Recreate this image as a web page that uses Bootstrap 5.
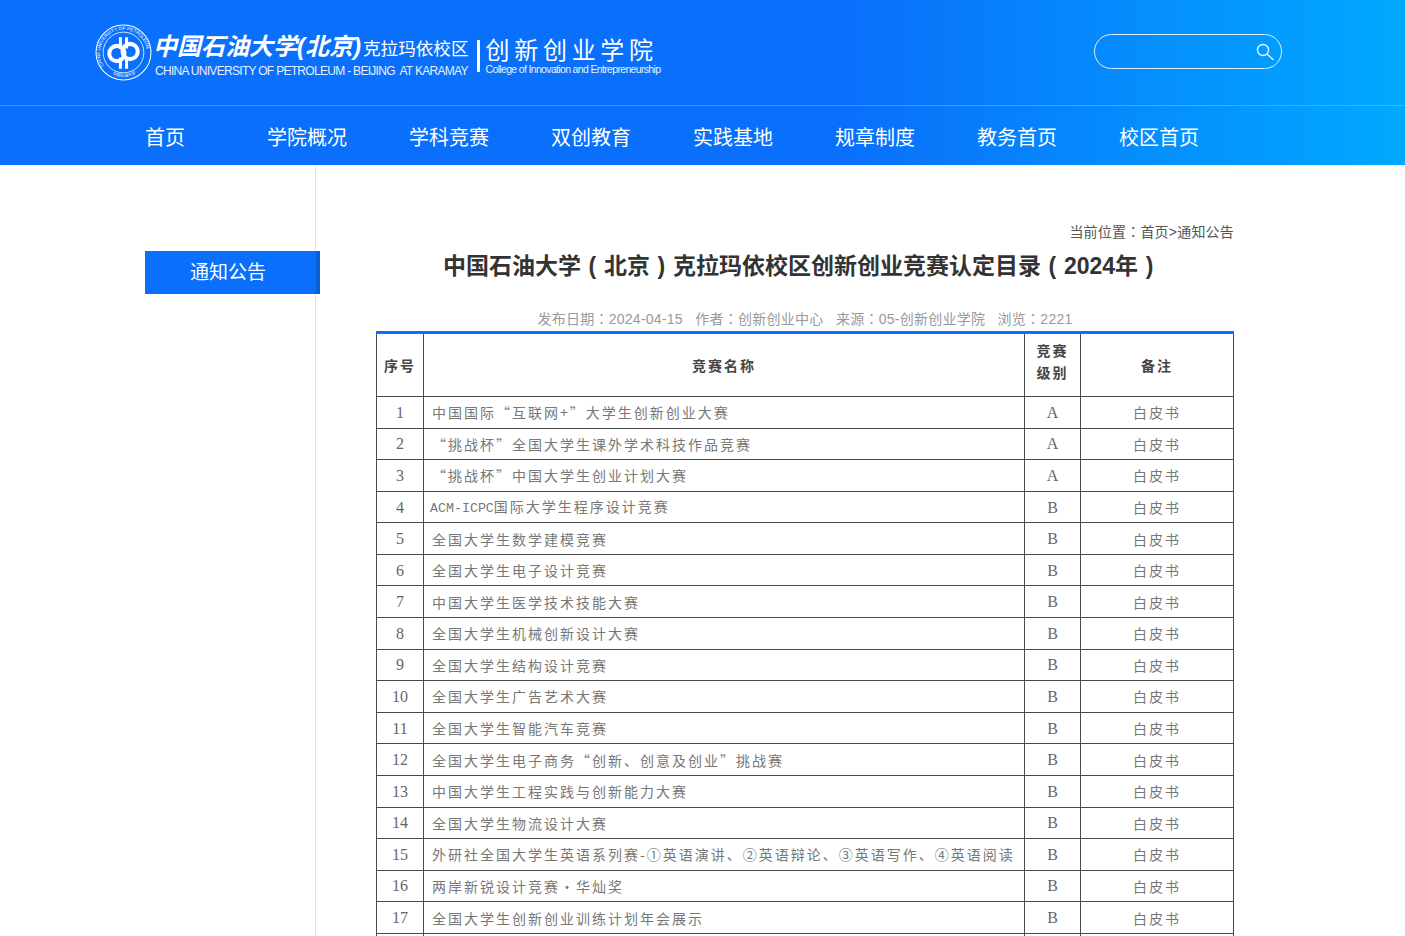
<!DOCTYPE html>
<html lang="zh-CN">
<head>
    <meta charset="UTF-8">
    <meta name="viewport" content="width=device-width, initial-scale=1.0">
    <title>创新创业学院</title>
    <link rel="stylesheet" href="https://cdn.jsdelivr.net/npm/bootstrap@5.3.0/dist/css/bootstrap.min.css">
    <style>
        body {
            font-family: "Liberation Sans", "Noto Sans CJK SC", sans-serif;
            color: #333;
            background-color: #fff;
        }
        .wide-punct { font-family: "Noto Sans CJK TC", sans-serif; line-height: 0; }
        .title-paren { display: inline-block; width: 1em; text-align: center; }
        .site-head {
            background: linear-gradient(90deg, #0a6ffb 0%, #0a6ffb 60%, #00a9ff 100%);
            color: #fff;
        }
        .head-top {
            height: 106px;
            padding: 24px 123px 0 95px;
            border-bottom: 1px solid rgba(255, 255, 255, .22);
        }
        .seal { width: 57px; height: 57px; flex: none; }
        .logo-text { margin: 6px 0 0 1px; }
        .logo-cn {
            font-size: 24px;
            line-height: 34px;
            height: 34px;
            font-weight: 700;
            font-style: italic;
            white-space: nowrap;
        }
        .logo-cn small { font-size: 17.6px; font-weight: 400; font-style: normal; margin-left: 2px; }
        .logo-en { font-size: 12px; line-height: 14px; letter-spacing: -.7px; margin-left: 2px; white-space: pre; opacity: .9; }
        .logo-bar { width: 3px; height: 32px; background: #fff; margin: 16px 6px 0 8px; }
        .college-cn { font-size: 24px; line-height: 26px; letter-spacing: 4.7px; margin-top: 14px; white-space: nowrap; }
        .college-en { font-size: 10.5px; line-height: 12px; letter-spacing: -.66px; margin-top: -1px; white-space: nowrap; opacity: .9; }
        .search-box { width: 188px; margin-top: 10px; }
        .search-box .form-control {
            height: 35px;
            background: transparent;
            border: 1px solid #d8f0ff;
            color: #fff;
            box-shadow: none;
        }
        .search-glass { position: absolute; right: 7px; top: 8px; width: 20px; height: 20px; }
        .main-nav { height: 59px; padding-left: 94px; }
        .main-nav .nav-link {
            width: 142px;
            padding: 0;
            line-height: 65px;
            text-align: center;
            font-size: 20px;
            color: #fff;
        }
        .page-body { min-height: 771px; }
        .side-col { width: 316px; flex: none; padding: 86px 0 0 145px; border-right: 1px solid #e4e4e4; }
        .side-link {
            display: block;
            width: 175px;
            height: 43px;
            line-height: 44px;
            padding-right: 5px;
            text-align: center;
            font-size: 19px;
            color: #fff;
            background: #0a6ffb;
            border-right: 4px solid #0b5fd6;
            text-decoration: none;
            position: relative;
        }
        .main-col { width: 858px; margin-left: 60px; flex: none; }
        .crumbs { font-size: 14px; line-height: 20px; padding-top: 57px; color: #555; letter-spacing: .2px; }
        .doc-title { font-size: 23px; line-height: 32px; height: 32px; font-weight: 700; color: #333; margin: 8px 0 0 -6px; text-align: center; }
        .doc-meta { font-size: 14px; line-height: 20px; color: #999; margin-top: 27px; height: 22px; letter-spacing: .25px; }
        .comp-table {
            border-top: 3px solid #0a6ffb;
        }
        .comp-table table {
            table-layout: fixed;
            border-collapse: separate;
            border-spacing: 0;
            border-left: 1px solid #4a4a4a;
            width: 858px;
            margin: 0;
            font-family: "Noto Sans CJK SC", sans-serif;
            font-size: 14px;
            letter-spacing: 2px;
            color: #777;
        }
        .comp-table th, .comp-table td {
            padding: 0 8px;
            height: 31.59px;
            line-height: 22px;
            vertical-align: middle;
            border-width: 0 1px 1px 0;
            border-style: solid;
            border-color: #4a4a4a;
            color: #777;
            background: transparent;
            white-space: nowrap;
        }
        .comp-table th { height: 63px; padding: 0; color: #444; text-align: center; font-weight: 700; }
        .comp-table th.two-line { padding: 0 0 9px; }
        .comp-table .lat { font-family: "Liberation Mono", monospace; font-size: 13.3px; letter-spacing: 0; margin-left: -2px; }
        .comp-table .num { font-family: "Liberation Serif", serif; font-size: 16px; letter-spacing: 0; padding: 1px 0 0; text-align: center; color: #666; }
        .comp-table .mid { padding: 0; text-align: center; }
    </style>
</head>
<body>
    <header class="site-head">
        <div class="head-top d-flex justify-content-between align-items-start">
            <div class="d-flex">
                <svg class="seal" viewBox="0 0 56 56" fill="none" stroke="#fff">
                    <circle cx="28" cy="28" r="27" stroke-width="1"/>
                    <circle cx="28" cy="28" r="20" stroke-width=".8"/>
                    <path id="sealTop" d="M8.500 41a23 23 0 1 1 39 0" stroke="none"/>
                    <path id="sealBottom" d="M12 46a24.500 24.500 0 0 0 32 0" stroke="none"/>
                    <text font-family="Liberation Sans, sans-serif" font-size="4.600" fill="#fff" stroke="none"><textPath href="#sealTop">CHINA UNIVERSITY OF PETROLEUM</textPath></text>
                    <text font-family="Noto Sans CJK SC, sans-serif" font-size="4" fill="#fff" stroke="none"><textPath href="#sealBottom" startOffset="6">中国石油大学</textPath></text>
                    <circle cx="21.500" cy="29" r="7.500" stroke-width="4"/>
                    <circle cx="34.500" cy="27" r="7.500" stroke-width="4"/>
                    <path d="M25 13v11M31 13v11M25 33v11M31 33v11" stroke-width="3"/>
                </svg>
                <div class="logo-text">
                    <div class="logo-cn">中国石油大学(北京)<small>克拉玛依校区</small></div>
                    <div class="logo-en">CHINA UNIVERSITY OF PETROLEUM - BEIJING  AT KARAMAY</div>
                </div>
                <div class="logo-bar"></div>
                <div>
                    <div class="college-cn">创新创业学院</div>
                    <div class="college-en">College of Innovation and Entrepreneurship</div>
                </div>
            </div>
            <form class="search-box position-relative">
                <input type="text" class="form-control rounded-pill" aria-label="搜索">
                <svg class="search-glass" viewBox="0 0 20 20" fill="none" stroke="#e6f6ff" stroke-width="1.4">
                    <circle cx="8" cy="8" r="5.500"/>
                    <path d="M12 12l6.500 6"/>
                </svg>
            </form>
        </div>
        <nav class="main-nav nav flex-nowrap">
            <a class="nav-link" href="#">首页</a>
            <a class="nav-link" href="#">学院概况</a>
            <a class="nav-link" href="#">学科竞赛</a>
            <a class="nav-link" href="#">双创教育</a>
            <a class="nav-link" href="#">实践基地</a>
            <a class="nav-link" href="#">规章制度</a>
            <a class="nav-link" href="#">教务首页</a>
            <a class="nav-link" href="#">校区首页</a>
        </nav>
    </header>

    <div class="page-body d-flex">
        <aside class="side-col">
            <a class="side-link" href="#">通知公告</a>
        </aside>
        <main class="main-col">
            <div class="crumbs text-end">当前位置<span class="wide-punct" lang="zh-TW">：</span>首页&gt;通知公告</div>
            <h1 class="doc-title">中国石油大学<span class="title-paren">(</span>北京<span class="title-paren">)</span>克拉玛依校区创新创业竞赛认定目录<span class="title-paren">(</span>2024年<span class="title-paren">)</span></h1>
            <div class="doc-meta text-center">发布日期<span class="wide-punct" lang="zh-TW">：</span>2024-04-15 &nbsp; 作者<span class="wide-punct" lang="zh-TW">：</span>创新创业中心 &nbsp; 来源<span class="wide-punct" lang="zh-TW">：</span>05-创新创业学院 &nbsp; 浏览<span class="wide-punct" lang="zh-TW">：</span>2221</div>
            <div class="comp-table">
                <table class="table table-bordered">
                    <colgroup>
                        <col style="width:47px">
                        <col style="width:601px">
                        <col style="width:56px">
                        <col style="width:153px">
                    </colgroup>
                    <thead>
                        <tr><th>序号</th><th>竞赛名称</th><th class="two-line">竞赛<br>级别</th><th>备注</th></tr>
                    </thead>
                    <tbody id="compRows"></tbody>
                </table>
            </div>
        </main>
    </div>

    <script type="text/javascript">
        const comps = [
            ['中国国际“互联网+”大学生创新创业大赛', 'A'],
            ['“挑战杯”全国大学生课外学术科技作品竞赛', 'A'],
            ['“挑战杯”中国大学生创业计划大赛', 'A'],
            ['<span class="lat">ACM-ICPC</span>国际大学生程序设计竞赛', 'B'],
            ['全国大学生数学建模竞赛', 'B'],
            ['全国大学生电子设计竞赛', 'B'],
            ['中国大学生医学技术技能大赛', 'B'],
            ['全国大学生机械创新设计大赛', 'B'],
            ['全国大学生结构设计竞赛', 'B'],
            ['全国大学生广告艺术大赛', 'B'],
            ['全国大学生智能汽车竞赛', 'B'],
            ['全国大学生电子商务“创新、创意及创业”挑战赛', 'B'],
            ['中国大学生工程实践与创新能力大赛', 'B'],
            ['全国大学生物流设计大赛', 'B'],
            ['外研社全国大学生英语系列赛-①英语演讲、②英语辩论、③英语写作、④英语阅读', 'B'],
            ['两岸新锐设计竞赛·华灿奖', 'B'],
            ['全国大学生创新创业训练计划年会展示', 'B']
        ];
        document.getElementById('compRows').innerHTML = comps.map((c, i) => `
            <tr>
                <td class="num">${i + 1}</td>
                <td>${c[0]}</td>
                <td class="num">${c[1]}</td>
                <td class="mid">白皮书</td>
            </tr>`).join('') + '<tr><td></td><td></td><td></td><td></td></tr>';
    </script>
    <script src="https://cdn.jsdelivr.net/npm/bootstrap@5.3.0/dist/js/bootstrap.bundle.min.js"></script>
</body>
</html>
